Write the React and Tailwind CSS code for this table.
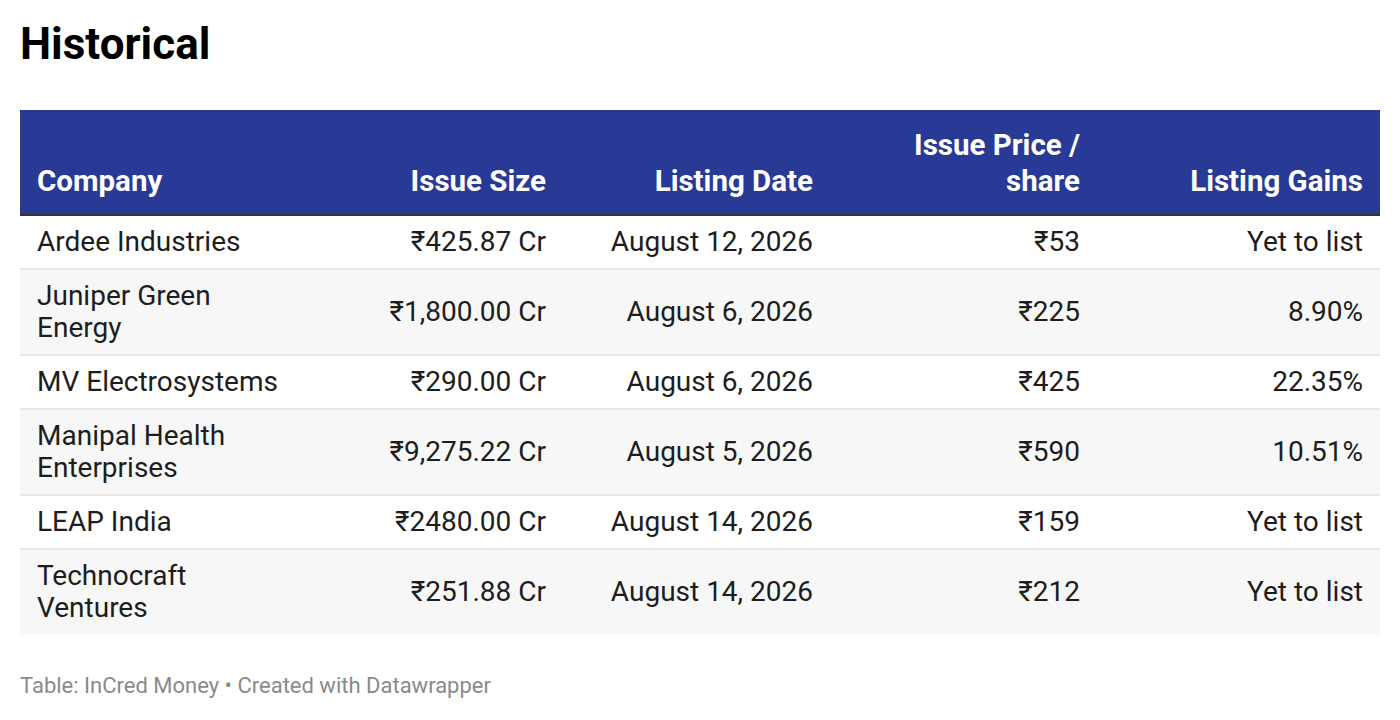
const rows = [
  { company: 'Ardee Industries', size: '₹425.87 Cr', date: 'August 12, 2026', price: '₹53', gains: 'Yet to list' },
  { company: 'Juniper Green Energy', size: '₹1,800.00 Cr', date: 'August 6, 2026', price: '₹225', gains: '8.90%' },
  { company: 'MV Electrosystems', size: '₹290.00 Cr', date: 'August 6, 2026', price: '₹425', gains: '22.35%' },
  { company: 'Manipal Health Enterprises', size: '₹9,275.22 Cr', date: 'August 5, 2026', price: '₹590', gains: '10.51%' },
  { company: 'LEAP India', size: '₹2480.00 Cr', date: 'August 14, 2026', price: '₹159', gains: 'Yet to list' },
  { company: 'Technocraft Ventures', size: '₹251.88 Cr', date: 'August 14, 2026', price: '₹212', gains: 'Yet to list' },
];

export default function App() {
  return (
    <div className="min-h-screen bg-white px-5 pt-[16px] font-['Roboto',sans-serif] text-[#1d1d1d]">
      <h1 className="text-[44px] font-bold leading-[56px] text-black">Historical</h1>

      <table className="mt-[38px] w-full table-fixed border-collapse">
        <colgroup>
          <col className="w-[276px]" />
          <col className="w-[267px]" />
          <col className="w-[267px]" />
          <col className="w-[267px]" />
          <col className="w-[283px]" />
        </colgroup>
        <thead>
          <tr className="h-[105px] border-b-2 border-[#333333] bg-[#283a96] text-[29.5px] font-bold leading-[36px] text-white">
            <th className="px-[17px] pb-[15px] text-left align-bottom">Company</th>
            <th className="px-[17px] pb-[15px] text-right align-bottom">Issue Size</th>
            <th className="px-[17px] pb-[15px] text-right align-bottom">Listing Date</th>
            <th className="px-[17px] pb-[15px] text-right align-bottom">Issue Price / share</th>
            <th className="px-[17px] pb-[15px] text-right align-bottom">Listing Gains</th>
          </tr>
        </thead>
        <tbody className="text-[28px] leading-[32px]">
          {rows.map((r, i) => (
            <tr key={r.company} className={`border-b-2 border-[#e8e8e8] last:border-b-0 ${i % 2 ? 'bg-[#f7f7f7]' : 'bg-white'}`}>
              <td className="px-[17px] py-[10px] text-left align-middle">{r.company}</td>
              <td className="px-[17px] py-[10px] text-right align-middle">{r.size}</td>
              <td className="px-[17px] py-[10px] text-right align-middle">{r.date}</td>
              <td className="px-[17px] py-[10px] text-right align-middle">{r.price}</td>
              <td className="px-[17px] py-[10px] text-right align-middle">{r.gains}</td>
            </tr>
          ))}
        </tbody>
      </table>

      <p className="mt-[37px] text-[22px] leading-[30px] text-[#8a8a8a]">Table: InCred Money • Created with Datawrapper</p>
    </div>
  );
}
